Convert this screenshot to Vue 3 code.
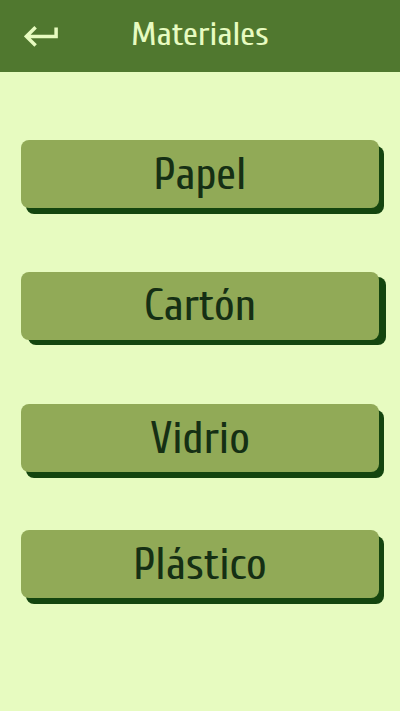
<script setup>
const materials = [
  { id: 'papel', name: 'Papel' },
  { id: 'carton', name: 'Cartón' },
  { id: 'vidrio', name: 'Vidrio' },
  { id: 'plastico', name: 'Plástico' },
]
</script>

<template>
  <div class="screen">
    <header class="bar">
      <button class="back" type="button" aria-label="Volver">
        <svg viewBox="0 0 34 22" width="34" height="22" aria-hidden="true">
          <path d="M11.6 2.2 2.4 11.4l9.2 9.2M2.8 11.4h29.3V2.4" fill="none" stroke="currentColor" stroke-width="3.5" />
        </svg>
      </button>
      <h1 class="title">Materiales</h1>
    </header>
    <main class="content">
      <ul class="list">
        <li v-for="m in materials" :key="m.id" class="item">
          <button class="card" :class="`card-${m.id}`" type="button">{{ m.name }}</button>
        </li>
      </ul>
    </main>
  </div>
</template>

<style>
body {
  margin: 0;
  background: #e7fbc0;
}
</style>

<style scoped>
.screen {
  min-height: 100vh;
  background: #e7fbc0;
  font-family: Cuprum, "Liberation Sans Narrow", "Liberation Sans", sans-serif;
}

.bar {
  display: grid;
  grid-template-columns: 34px 1fr 34px;
  align-items: center;
  height: 72px;
  padding: 0 24px;
  background: #50782f;
  color: #e7fbc0;
}

.back {
  display: flex;
  padding: 0;
  border: 0;
  background: none;
  color: inherit;
  cursor: pointer;
}

.title {
  margin: 0;
  padding-bottom: 2px;
  font-size: 34px;
  font-weight: 400;
  line-height: 40px;
  text-align: center;
}

.content {
  padding: 68px 21px;
}

.list {
  margin: 0;
  padding: 0;
  list-style: none;
}

.item + .item {
  margin-top: 64px;
}

.item + .item:last-child {
  margin-top: 58px;
}

.card {
  display: block;
  width: 100%;
  height: 68px;
  padding: 2px 0 0;
  border: 0;
  border-radius: 8px;
  background: #91aa57;
  box-shadow: 5px 6px 0 #14450f;
  color: #152f14;
  font: inherit;
  font-size: 45px;
  line-height: 66px;
  text-align: center;
  cursor: pointer;
}

.card-carton {
  padding-top: 0;
  box-shadow: 7px 5px 0 #14450f;
}
</style>
